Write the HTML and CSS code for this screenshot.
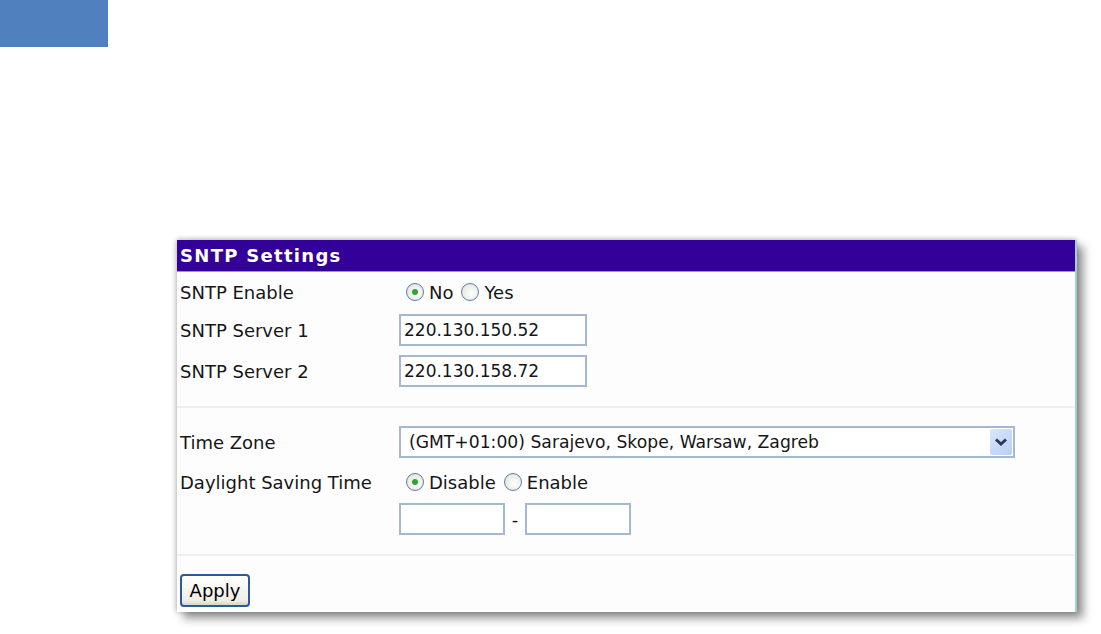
FILE: index.html
```html
<!DOCTYPE html>
<html>
<head>
<meta charset="utf-8">
<link rel="stylesheet" href="styles.css">
</head>
<body>
<div class="logo-block"></div>
<div class="panel">
  <div class="panel-header">SNTP Settings</div>
  <div class="row r40">
    <div class="label">SNTP Enable</div>
    <div class="control radios">
      <span class="radio checked"></span><span class="rlabel">No</span>
      <span class="radio"></span><span class="rlabel">Yes</span>
    </div>
  </div>
  <div class="row r36">
    <div class="label">SNTP Server 1</div>
    <div class="control"><div class="textbox w188">220.130.150.52</div></div>
  </div>
  <div class="row r46">
    <div class="label">SNTP Server 2</div>
    <div class="control"><div class="textbox w188">220.130.158.72</div></div>
  </div>
  <div class="sep first"></div>
  <div class="row r40">
    <div class="label">Time Zone</div>
    <div class="control">
      <div class="select">
        <span class="select-text">(GMT+01:00) Sarajevo, Skope, Warsaw, Zagreb</span>
        <span class="select-btn"><svg width="14" height="10" viewBox="0 0 14 10"><path d="M2 2.5 L7 7 L12 2.5" fill="none" stroke="#2b3a5a" stroke-width="3"/></svg></span>
      </div>
    </div>
  </div>
  <div class="row r40">
    <div class="label">Daylight Saving Time</div>
    <div class="control radios">
      <span class="radio checked"></span><span class="rlabel">Disable</span>
      <span class="radio"></span><span class="rlabel">Enable</span>
    </div>
  </div>
  <div class="row r34">
    <div class="label"></div>
    <div class="control range">
      <div class="textbox w106"></div>
      <span class="dash">-</span>
      <div class="textbox w106"></div>
    </div>
  </div>
  <div class="sep second"></div>
  <div class="footer">
    <button class="apply">Apply</button>
  </div>
</div>
</body>
</html>
```
FILE: styles.css
```css
html, body {
  margin: 0;
  padding: 0;
  background: #ffffff;
}
body {
  font-family: "DejaVu Sans", Verdana, sans-serif;
  font-size: 18px;
  color: #161616;
  padding-bottom: 22px;
}
.logo-block {
  width: 108px;
  height: 47px;
  background: #5080be;
}
.panel {
  margin: 193px 0 0 177px;
  width: 898px;
  background: #fdfdfd;
  border-right: 2px solid #9fd2d2;
  box-shadow: 6px 6px 9px rgba(0,0,0,0.45), -2px 0 5px rgba(0,0,0,0.15), 0 -2px 4px rgba(0,0,0,0.12);
}
.panel-header {
  height: 32px;
  line-height: 32px;
  background: #330099;
  color: #ffffff;
  font-weight: bold;
  font-size: 18px;
  letter-spacing: 1.3px;
  padding-left: 3px;
  border-bottom: 1px solid #a68ad8;
  box-sizing: border-box;
}
.row {
  display: flex;
  align-items: center;
}
.r40 { height: 40px; }
.r36 { height: 36px; }
.r46 { height: 46px; }
.r34 { height: 34px; }
.label {
  width: 219px;
  padding-left: 3px;
  flex: none;
}
.control {
  display: flex;
  align-items: center;
}
.radios {
  padding-left: 7px;
}
.radio {
  width: 18px;
  height: 18px;
  border-radius: 50%;
  border: 1px solid #5d7da8;
  background: radial-gradient(circle at 60% 60%, #ffffff 0%, #e8e8e2 70%, #c9c9c0 100%);
  box-sizing: border-box;
  position: relative;
  margin-right: 5px;
}
.radio.checked::after {
  content: "";
  position: absolute;
  left: 5px;
  top: 5px;
  width: 6px;
  height: 6px;
  border-radius: 50%;
  background: #2fa42f;
}
.rlabel {
  margin-right: 8px;
}
.textbox {
  height: 32px;
  box-sizing: border-box;
  border: 2px solid #a4b8d0;
  background: #ffffff;
  padding-left: 3px;
  line-height: 28px;
  font-size: 17px;
}
.w188 { width: 188px; }
.w106 { width: 106px; }
.dash {
  width: 20px;
  text-align: center;
}
.sep {
  border-bottom: 2px solid #efefef;
}
.sep.first {
  height: 12px;
  margin-bottom: 14px;
}
.sep.second {
  height: 18px;
  margin-bottom: 18px;
}
.select {
  width: 616px;
  height: 32px;
  box-sizing: border-box;
  border: 2px solid #a4b8d0;
  background: #ffffff;
  display: flex;
  align-items: center;
  justify-content: space-between;
  font-size: 17.2px;
}
.select-text {
  padding-left: 8px;
}
.select-btn {
  width: 22px;
  height: 26px;
  margin-right: 1px;
  background: linear-gradient(135deg, #dbe6fb 0%, #b8cdf6 100%);
  border-radius: 2px;
  display: flex;
  align-items: center;
  justify-content: center;
}
.footer {
  padding: 0 0 5px 3px;
}
.apply {
  height: 33px;
  width: 70px;
  font-family: "DejaVu Sans", Verdana, sans-serif;
  font-size: 18px;
  color: #000;
  background: linear-gradient(#ffffff, #eeede5 85%, #d8d6cb);
  border: 2px solid #2c5a96;
  border-radius: 4px;
  padding: 0;
  display: block;
}
```
